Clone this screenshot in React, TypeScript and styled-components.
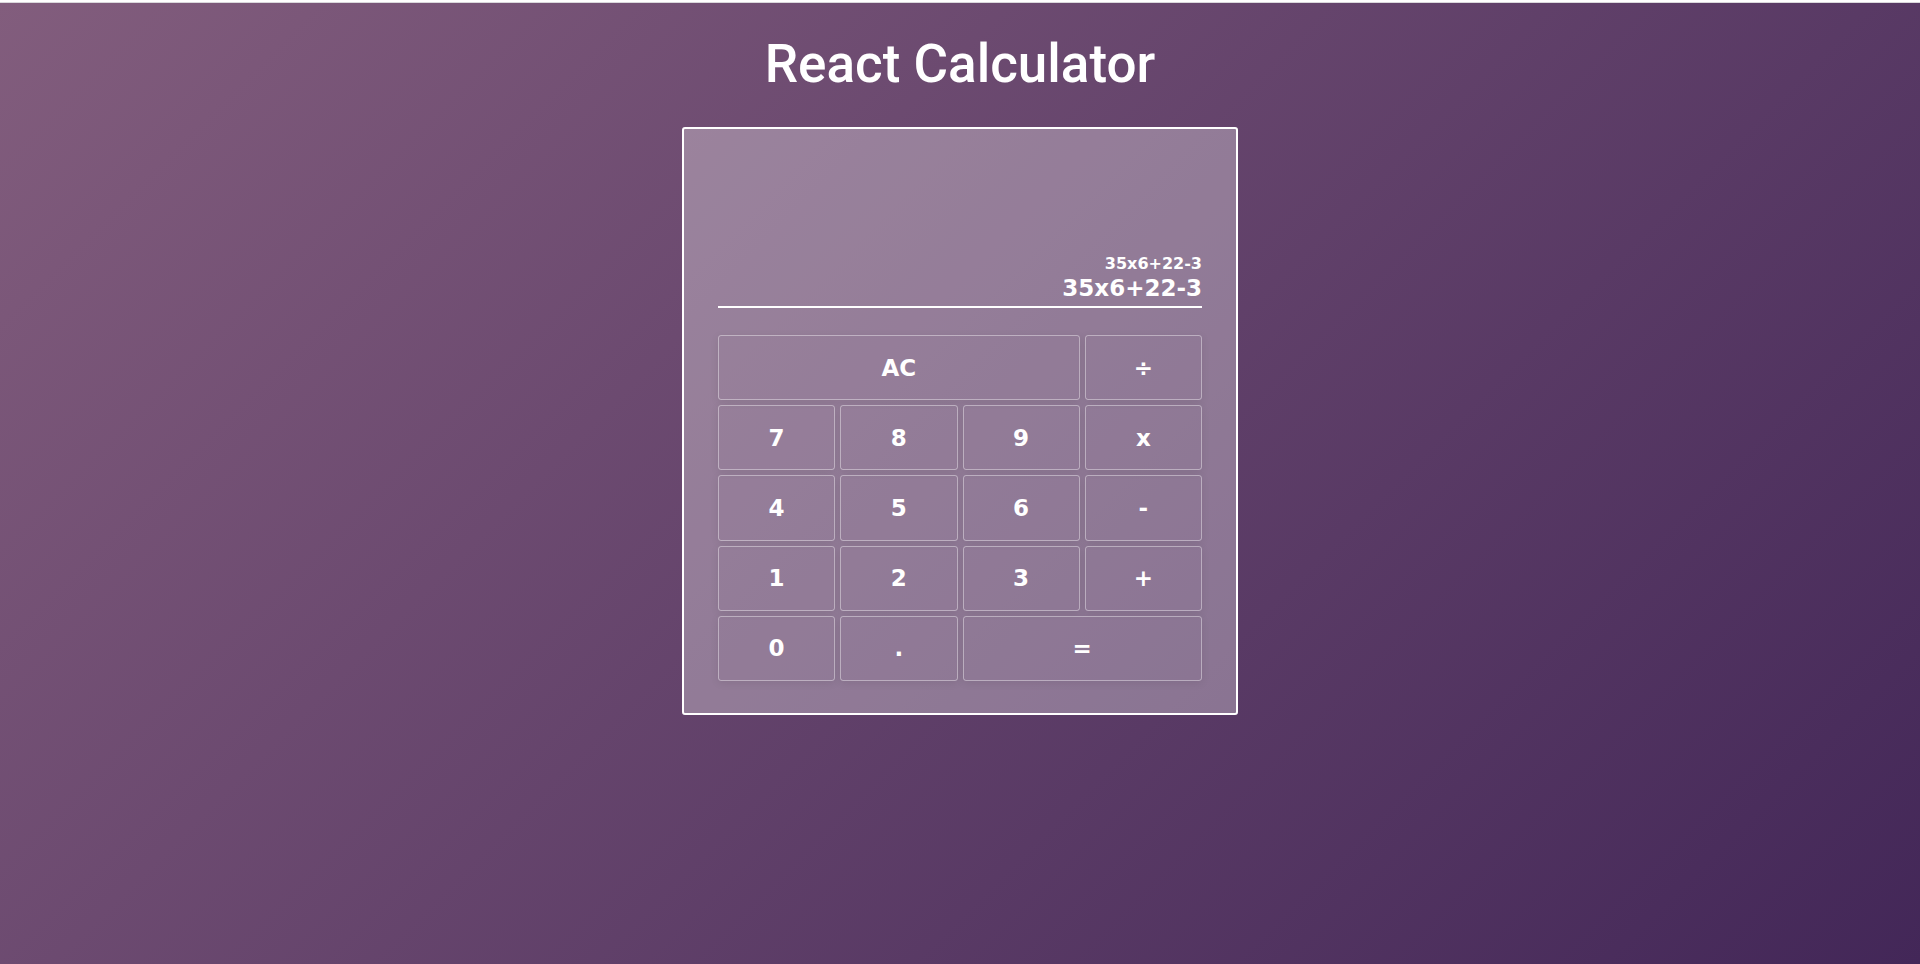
import React, { useState } from "react";
import styled, { createGlobalStyle } from "styled-components";

const GlobalStyle = createGlobalStyle`
  *, *::before, *::after {
    box-sizing: border-box;
  }

  body {
    margin: 0;
    color: #fff;
    font-family: "DejaVu Sans", Verdana, sans-serif;
  }
`;

const Page = styled.main`
  display: flex;
  flex-direction: column;
  align-items: center;
  min-height: 100vh;
  padding: 30px 16px 32px;
  border-top: 2px solid #fff;
  background: linear-gradient(135deg, #825d7d, #432758) border-box;
  box-shadow: inset 0 1px #dad8dc;
`;

const Title = styled.h1`
  margin: 0 0 31px;
  font-family: Roboto, sans-serif;
  font-size: 53px;
  font-weight: 500;
  line-height: 64px;
  text-align: center;
`;

const Card = styled.section`
  width: 100%;
  max-width: 556px;
  padding: 32px 34px;
  border: 2px solid #fff;
  border-radius: 3px;
  background: rgba(255, 255, 255, 0.3);
`;

const Screen = styled.div`
  display: flex;
  flex-direction: column;
  justify-content: flex-end;
  align-items: flex-end;
  min-height: 147px;
  margin-bottom: 27px;
  padding-bottom: 4px;
  border-bottom: 2px solid #fff;
  font-weight: 700;
`;

const Formula = styled.div`
  font-size: 16px;
  line-height: 20px;
`;

const Output = styled.output`
  font-size: 23px;
  line-height: 28px;
`;

const Keypad = styled.div`
  display: grid;
  grid-template-columns: repeat(4, 1fr);
  grid-template-rows: repeat(5, 1fr);
  gap: 5px;
  min-height: 346px;
`;

const Key = styled.button<{ $span?: number }>`
  grid-column: span ${({ $span }) => $span ?? 1};
  padding: 0;
  border: 1px solid rgba(255, 255, 255, 0.4);
  border-radius: 3px;
  background: transparent;
  box-shadow: 0 2px 8px rgba(0, 0, 0, 0.08);
  color: inherit;
  font-family: inherit;
  font-size: 23px;
  font-weight: 700;
  line-height: 28px;
  cursor: pointer;

  &:hover {
    border-color: #fff;
  }
`;

const keys: { label: string; span?: number }[] = [
  { label: "AC", span: 3 },
  { label: "÷" },
  { label: "7" },
  { label: "8" },
  { label: "9" },
  { label: "x" },
  { label: "4" },
  { label: "5" },
  { label: "6" },
  { label: "-" },
  { label: "1" },
  { label: "2" },
  { label: "3" },
  { label: "+" },
  { label: "0" },
  { label: "." },
  { label: "=", span: 2 },
];

function evaluate(expression: string): string {
  const tokens = expression.match(/\d+\.?\d*|\.\d+|[-+x÷]/g) ?? [];
  const terms: number[] = [];
  let operator = "+";
  for (const token of tokens) {
    if (/^[-+x÷]$/.test(token)) {
      operator = token;
      continue;
    }
    const value = Number(token);
    if (operator === "x") terms.push((terms.pop() ?? 0) * value);
    else if (operator === "÷") terms.push((terms.pop() ?? 0) / value);
    else terms.push(operator === "-" ? -value : value);
  }
  return String(terms.reduce((sum, term) => sum + term, 0));
}

export default function App() {
  const [formula, setFormula] = useState("35x6+22-3");
  const [output, setOutput] = useState("35x6+22-3");

  const press = (label: string) => {
    if (label === "AC") {
      setFormula("");
      setOutput("0");
    } else if (label === "=") {
      setOutput(evaluate(formula));
    } else {
      setFormula(formula + label);
      setOutput(formula + label);
    }
  };

  return (
    <>
      <GlobalStyle />
      <Page>
        <Title>React Calculator</Title>
        <Card aria-label="Calculator">
          <Screen>
            <Formula>{formula}</Formula>
            <Output>{output}</Output>
          </Screen>
          <Keypad>
            {keys.map(({ label, span }) => (
              <Key key={label} type="button" $span={span} onClick={() => press(label)}>
                {label}
              </Key>
            ))}
          </Keypad>
        </Card>
      </Page>
    </>
  );
}
